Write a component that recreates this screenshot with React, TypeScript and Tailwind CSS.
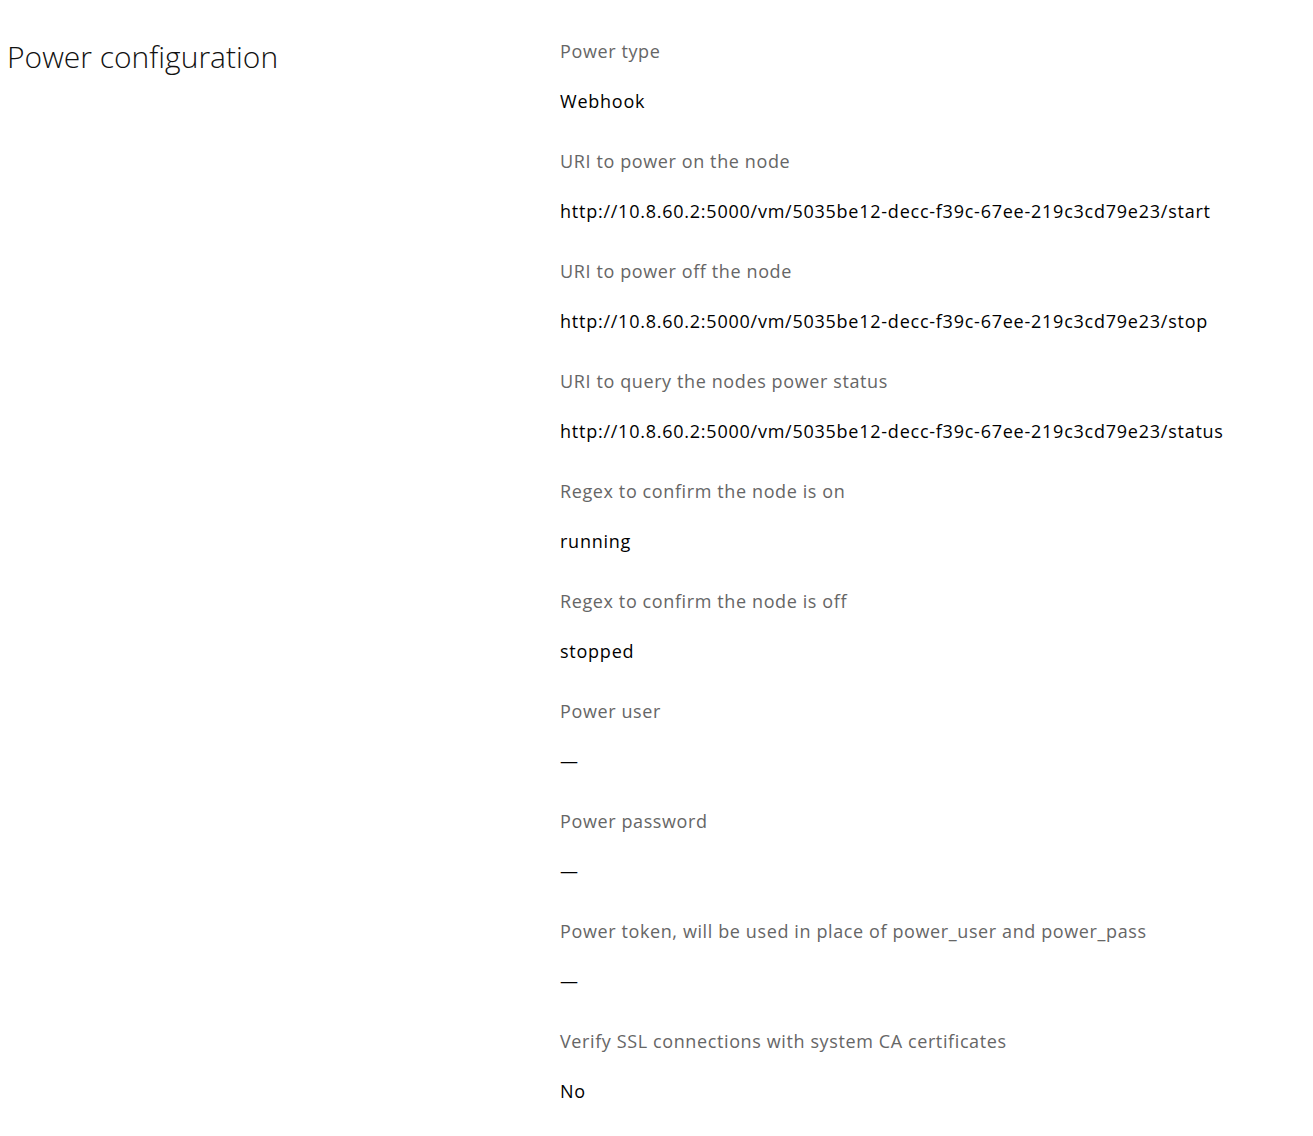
const rows: { label: string; value: string }[] = [
  { label: "Power type", value: "Webhook" },
  {
    label: "URI to power on the node",
    value: "http://10.8.60.2:5000/vm/5035be12-decc-f39c-67ee-219c3cd79e23/start",
  },
  {
    label: "URI to power off the node",
    value: "http://10.8.60.2:5000/vm/5035be12-decc-f39c-67ee-219c3cd79e23/stop",
  },
  {
    label: "URI to query the nodes power status",
    value: "http://10.8.60.2:5000/vm/5035be12-decc-f39c-67ee-219c3cd79e23/status",
  },
  { label: "Regex to confirm the node is on", value: "running" },
  { label: "Regex to confirm the node is off", value: "stopped" },
  { label: "Power user", value: "—" },
  { label: "Power password", value: "—" },
  {
    label: "Power token, will be used in place of power_user and power_pass",
    value: "—",
  },
  { label: "Verify SSL connections with system CA certificates", value: "No" },
];

export default function App() {
  return (
    <div
      className="min-h-[1136px] bg-white pl-[7px] text-[#111]"
      style={{ fontFamily: '"Open Sans", "Noto Sans", sans-serif' }}
    >
      <div className="flex">
        {/* Section title */}
        <div className="w-[553px] shrink-0 pt-[37px]">
          <h3 className="text-[30px] font-light leading-[40px] text-[#111]">Power configuration</h3>
        </div>
        {/* Definition list */}
        <dl className="flex-1 pt-[39px]">
          {rows.map((row, idx) => (
            <div key={idx} className="mb-[36px]">
              <dt className="text-[18px] leading-[24px] tracking-[0.034em] text-[#666]">{row.label}</dt>
              <dd className="mt-[26px] text-[18px] leading-[24px] tracking-[0.042em] text-black">
                {row.value}
              </dd>
            </div>
          ))}
        </dl>
      </div>
    </div>
  );
}
